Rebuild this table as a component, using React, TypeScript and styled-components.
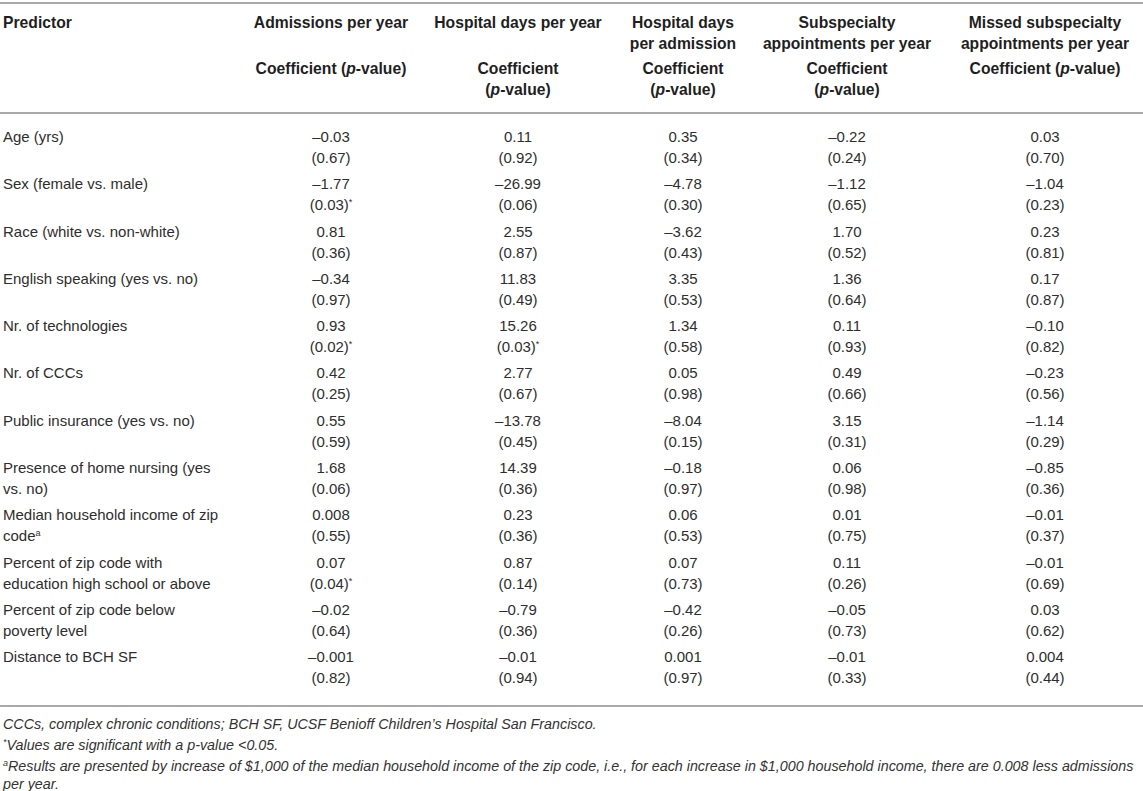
import React from "react";
import styled, { createGlobalStyle } from "styled-components";

const GlobalStyle = createGlobalStyle`
  html, body {
    margin: 0;
    padding: 0;
    background: #ffffff;
  }
  body {
    font-family: "Liberation Sans", Arial, Helvetica, sans-serif;
    color: #2b2b2b;
  }
`;

const Page = styled.div`
  width: 1143px;
  padding-top: 2px;
`;

const Table = styled.table`
  width: 1143px;
  border-collapse: collapse;
  table-layout: fixed;
  border-top: 2px solid #a9a9a9;
  border-bottom: 2px solid #a9a9a9;
`;

const Col = styled.col<{ $w: number }>`
  width: ${(p) => p.$w}px;
`;

const Head = styled.thead`
  border-bottom: 2px solid #a9a9a9;
`;

const Th = styled.th<{ $first?: boolean; $shift?: number; $top?: boolean }>`
  font-size: 15.7px;
  line-height: 21px;
  font-weight: bold;
  color: #1f1f1f;
  white-space: nowrap;
  vertical-align: top;
  text-align: ${(p) => (p.$first ? "left" : "center")};
  padding: ${(p) => (p.$top ? "8px" : "4px")} ${(p) => (p.$first ? "8px" : "2px")}
    ${(p) => (p.$top ? "0" : "12px")} ${(p) => (p.$first ? 3 : 2 + (p.$shift || 0))}px;
`;

const Body = styled.tbody`
  tr:first-child td {
    padding-top: 12px;
  }
  tr:last-child td {
    padding-bottom: 17px;
  }
`;

const Td = styled.td<{ $first?: boolean; $shift?: number }>`
  font-size: 15px;
  line-height: 21px;
  color: #2e2e2e;
  vertical-align: top;
  text-align: ${(p) => (p.$first ? "left" : "center")};
  padding: 2.65px ${(p) => (p.$first ? "8px" : "6px")} 2.65px
    ${(p) => (p.$first ? 3 : 6 + (p.$shift || 0))}px;
`;

const Line = styled.div`
  white-space: nowrap;
`;

const Sup = styled.sup`
  font-size: 9px;
  line-height: 0;
  vertical-align: 0.55em;
`;

const Notes = styled.div`
  padding: 8px 0 0 3px;
  font-style: italic;
  font-size: 14.3px;
  line-height: 18px;
  color: #333;
`;

const Note = styled.p`
  margin: 0 0 3px 0;
`;

type Cell = [string, string, boolean?];
type Row = { label: React.ReactNode; cells: Cell[] };

const M = "\u2013";

const rows: Row[] = [
  { label: "Age (yrs)", cells: [[`${M}0.03`, "0.67"], ["0.11", "0.92"], ["0.35", "0.34"], [`${M}0.22`, "0.24"], ["0.03", "0.70"]] },
  { label: "Sex (female vs. male)", cells: [[`${M}1.77`, "0.03", true], [`${M}26.99`, "0.06"], [`${M}4.78`, "0.30"], [`${M}1.12`, "0.65"], [`${M}1.04`, "0.23"]] },
  { label: "Race (white vs. non-white)", cells: [["0.81", "0.36"], ["2.55", "0.87"], [`${M}3.62`, "0.43"], ["1.70", "0.52"], ["0.23", "0.81"]] },
  { label: "English speaking (yes vs. no)", cells: [[`${M}0.34`, "0.97"], ["11.83", "0.49"], ["3.35", "0.53"], ["1.36", "0.64"], ["0.17", "0.87"]] },
  { label: "Nr. of technologies", cells: [["0.93", "0.02", true], ["15.26", "0.03", true], ["1.34", "0.58"], ["0.11", "0.93"], [`${M}0.10`, "0.82"]] },
  { label: "Nr. of CCCs", cells: [["0.42", "0.25"], ["2.77", "0.67"], ["0.05", "0.98"], ["0.49", "0.66"], [`${M}0.23`, "0.56"]] },
  { label: "Public insurance (yes vs. no)", cells: [["0.55", "0.59"], [`${M}13.78`, "0.45"], [`${M}8.04`, "0.15"], ["3.15", "0.31"], [`${M}1.14`, "0.29"]] },
  { label: "Presence of home nursing (yes vs. no)", cells: [["1.68", "0.06"], ["14.39", "0.36"], [`${M}0.18`, "0.97"], ["0.06", "0.98"], [`${M}0.85`, "0.36"]] },
  {
    label: (
      <>
        Median household income of zip code<Sup>a</Sup>
      </>
    ),
    cells: [["0.008", "0.55"], ["0.23", "0.36"], ["0.06", "0.53"], ["0.01", "0.75"], [`${M}0.01`, "0.37"]],
  },
  { label: "Percent of zip code with education high school or above", cells: [["0.07", "0.04", true], ["0.87", "0.14"], ["0.07", "0.73"], ["0.11", "0.26"], [`${M}0.01`, "0.69"]] },
  { label: "Percent of zip code below poverty level", cells: [[`${M}0.02`, "0.64"], [`${M}0.79`, "0.36"], [`${M}0.42`, "0.26"], [`${M}0.05`, "0.73"], ["0.03", "0.62"]] },
  { label: "Distance to BCH SF", cells: [[`${M}0.001`, "0.82"], [`${M}0.01`, "0.94"], ["0.001", "0.97"], [`${M}0.01`, "0.33"], ["0.004", "0.44"]] },
];

const widths = [235, 192, 182, 148, 180, 206];
const shifts = [0, 0, 0, 0, 0, 10];

const PVal = () => (
  <>
    (<i>p</i>-value)
  </>
);

export default function App() {
  return (
    <Page>
      <GlobalStyle />
      <Table>
        <colgroup>
          {widths.map((w, i) => (
            <Col key={i} $w={w} />
          ))}
        </colgroup>
        <Head>
          <tr>
            <Th $first $top>Predictor</Th>
            <Th $top>Admissions per year</Th>
            <Th $top>Hospital days per year</Th>
            <Th $top>
              Hospital days
              <br />
              per admission
            </Th>
            <Th $top>
              Subspecialty
              <br />
              appointments per year
            </Th>
            <Th $top $shift={10}>
              Missed subspecialty
              <br />
              appointments per year
            </Th>
          </tr>
          <tr>
            <Th $first />
            <Th>
              Coefficient <PVal />
            </Th>
            <Th>
              Coefficient
              <br />
              <PVal />
            </Th>
            <Th>
              Coefficient
              <br />
              <PVal />
            </Th>
            <Th>
              Coefficient
              <br />
              <PVal />
            </Th>
            <Th $shift={10}>
              Coefficient <PVal />
            </Th>
          </tr>
        </Head>
        <Body>
          {rows.map((r, i) => (
            <tr key={i}>
              <Td $first>{r.label}</Td>
              {r.cells.map(([v, p, sig], j) => (
                <Td key={j} $shift={shifts[j + 1]}>
                  <Line>{v}</Line>
                  <Line>
                    ({p}){sig ? <Sup>*</Sup> : null}
                  </Line>
                </Td>
              ))}
            </tr>
          ))}
        </Body>
      </Table>
      <Notes>
        <Note>CCCs, complex chronic conditions; BCH SF, UCSF Benioff Children’s Hospital San Francisco.</Note>
        <Note>
          <Sup>*</Sup>Values are significant with a p-value &lt;0.05.
        </Note>
        <Note>
          <Sup>a</Sup>Results are presented by increase of $1,000 of the median household income of the zip code, i.e., for
          each increase in $1,000 household income, there are 0.008 less admissions per year.
        </Note>
      </Notes>
    </Page>
  );
}
